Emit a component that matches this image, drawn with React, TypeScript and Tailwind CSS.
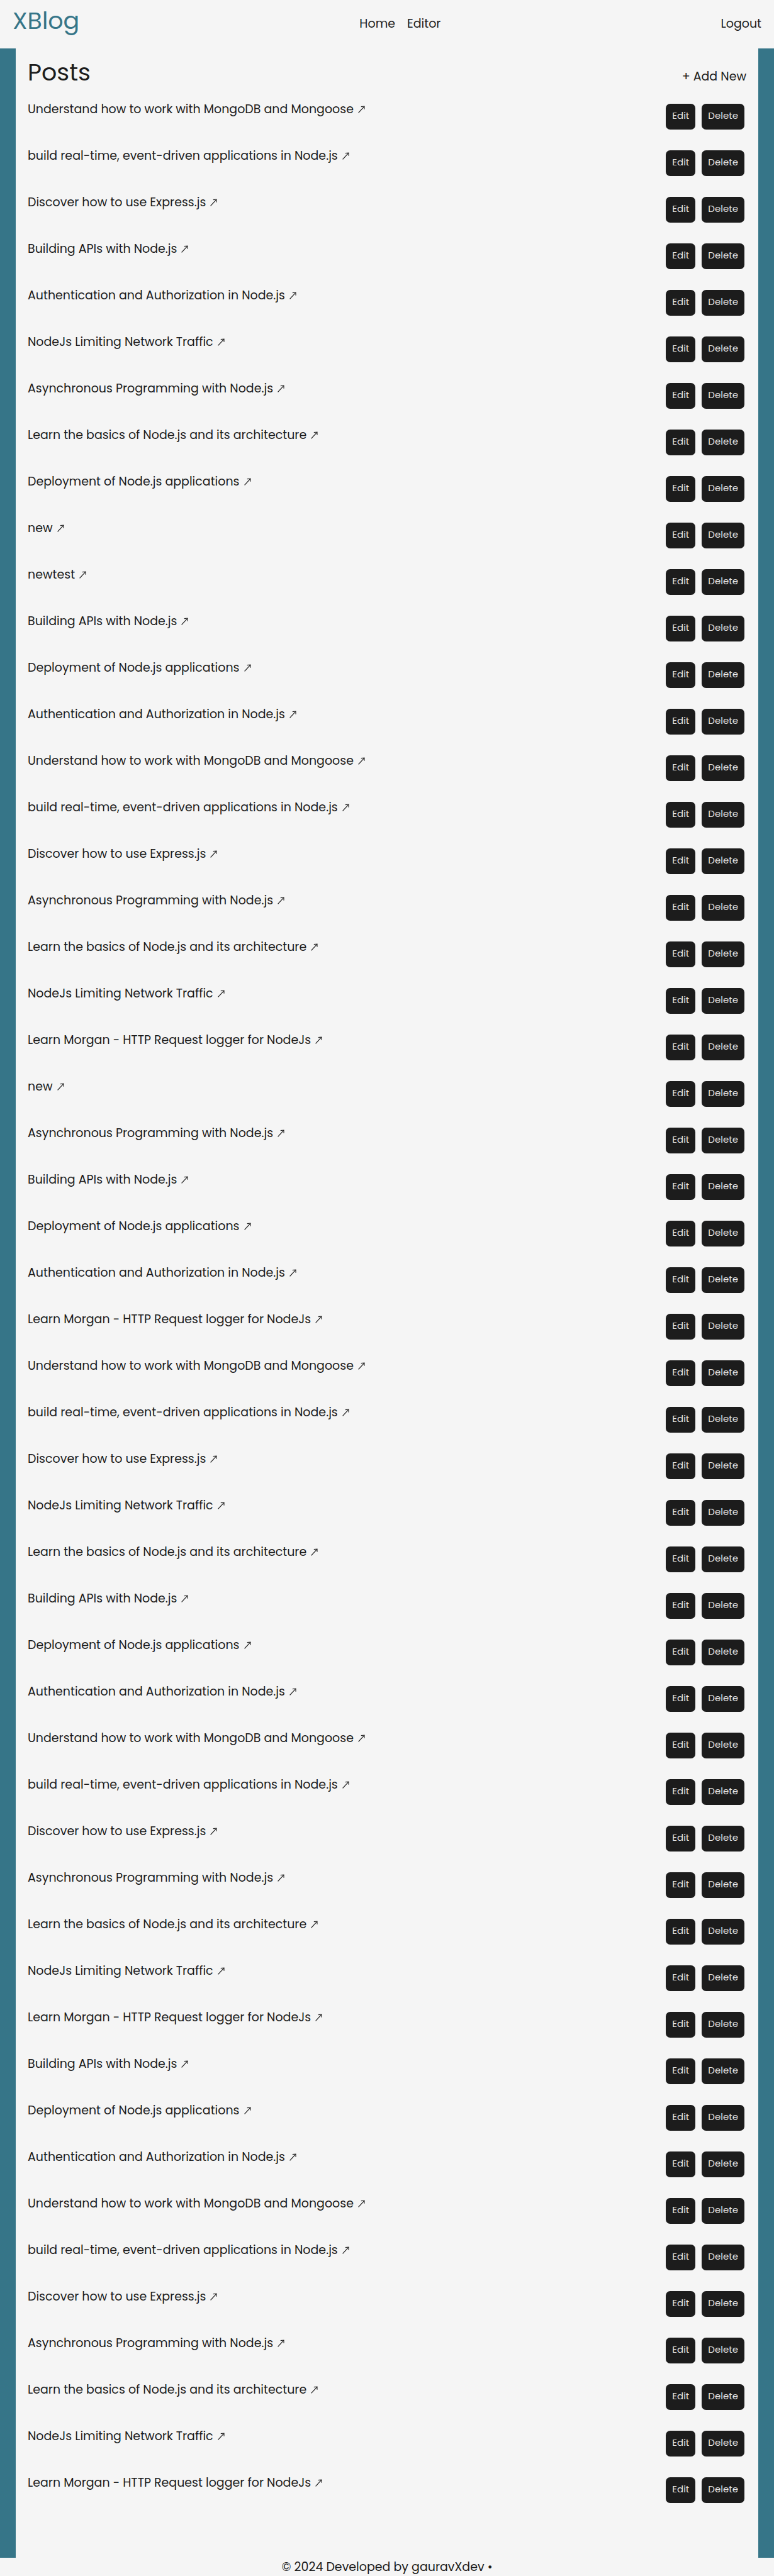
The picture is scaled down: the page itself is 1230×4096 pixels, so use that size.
const UNDERSTAND = "Understand how to work with MongoDB and Mongoose";
const REALTIME = "build real-time, event-driven applications in Node.js";
const EXPRESS = "Discover how to use Express.js";
const APIS = "Building APIs with Node.js";
const AUTH = "Authentication and Authorization in Node.js";
const TRAFFIC = "NodeJs Limiting Network Traffic";
const ASYNC = "Asynchronous Programming with Node.js";
const BASICS = "Learn the basics of Node.js and its architecture";
const DEPLOY = "Deployment of Node.js applications";
const MORGAN = "Learn Morgan - HTTP Request logger for NodeJs";

const posts: string[] = [
  UNDERSTAND, REALTIME, EXPRESS, APIS, AUTH, TRAFFIC, ASYNC, BASICS, DEPLOY, "new", "newtest",
  APIS, DEPLOY, AUTH, UNDERSTAND, REALTIME, EXPRESS, ASYNC, BASICS, TRAFFIC, MORGAN, "new",
  ASYNC, APIS, DEPLOY, AUTH, MORGAN, UNDERSTAND, REALTIME, EXPRESS, TRAFFIC, BASICS,
  APIS, DEPLOY, AUTH, UNDERSTAND, REALTIME, EXPRESS, ASYNC, BASICS, TRAFFIC, MORGAN,
  APIS, DEPLOY, AUTH, UNDERSTAND, REALTIME, EXPRESS, ASYNC, BASICS, TRAFFIC, MORGAN,
];

function ArrowIcon() {
  return (
    <svg className="ml-[7px] inline-block h-3 w-[11px] align-baseline" viewBox="0 0 11 12" fill="none" stroke="currentColor" aria-hidden="true">
      <path d="M0.6 11.3 L9.8 1.3" strokeWidth="1.2" />
      <path d="M4.8 1.6 L10 1 L10 5.8" strokeWidth="1.1" />
    </svg>
  );
}

function PostRow({ title }: { title: string }) {
  return (
    <li className="flex items-start justify-between pb-[27px]">
      <a href="#post" className="leading-[29px]">
        {title}
        <ArrowIcon />
      </a>
      <div className="flex gap-2.5 pt-1.5 pr-[3px] text-[15px] text-[#e6e6e6]">
        <button type="button" className="h-[41px] rounded-[7px] bg-[#1c1c1c] px-2.5 pb-0.5">Edit</button>
        <button type="button" className="h-[41px] rounded-[7px] bg-[#1c1c1c] px-2.5 pb-0.5">Delete</button>
      </div>
    </li>
  );
}

export default function App() {
  return (
    <div className="bg-[#367588] font-['Poppins','Inter',sans-serif] text-[19px] text-[#1c1c1c]">
      <header className="flex h-[77px] items-center justify-between bg-[#f5f5f5] px-5">
        <a href="#top" className="pb-3 text-[38px] leading-[48px] text-[#367588]">XBlog</a>
        <nav className="flex gap-[19px]">
          <a href="#home">Home</a>
          <a href="#editor">Editor</a>
        </nav>
        <a href="#logout">Logout</a>
      </header>
      <main className="mx-[25px] bg-[#f5f5f5] px-[19px] pb-[60px]">
        <div className="flex h-[82px] items-baseline justify-between pt-[14px]">
          <h1 className="text-[38px] leading-[48px]">Posts</h1>
          <a href="#new">+ Add New</a>
        </div>
        <ul>
          {posts.map((title, i) => (
            <PostRow key={i} title={title} />
          ))}
        </ul>
      </main>
      <footer className="bg-[#f5f5f5] text-center leading-[29px]">© 2024 Developed by gauravXdev •</footer>
    </div>
  );
}
